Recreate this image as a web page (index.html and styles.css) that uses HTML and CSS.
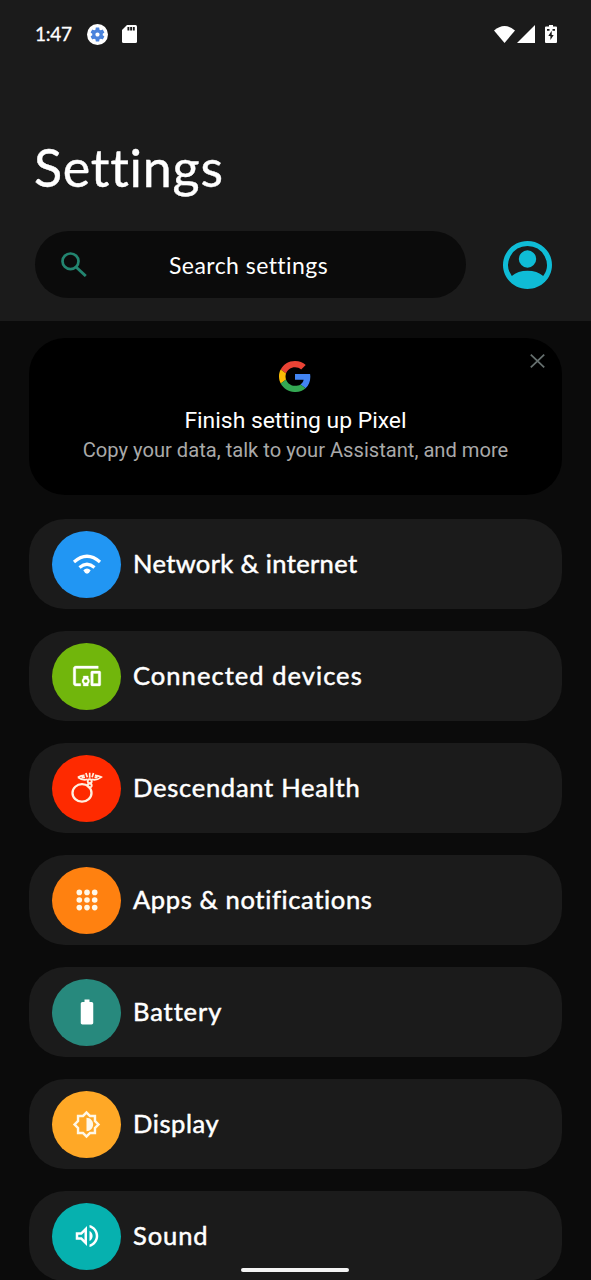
FILE: index.html
```html
<!DOCTYPE html>
<html lang="en">
<head>
<meta charset="utf-8">
<title>Settings</title>
<link rel="stylesheet" href="styles.css">
</head>
<body>
<div class="screen">
  <header class="header">
    <div class="status-bar">
      <span class="clock">1:47</span>
      <svg class="status-gear" viewBox="0 0 24 24"><circle cx="12" cy="12" r="12" fill="#fff"/><path transform="translate(2.4 2.4) scale(.8)" fill="#4a83dc" d="M19.430 12.980c.04-.32.07-.64.07-.98s-.03-.66-.07-.98l2.110-1.650c.19-.15.24-.42.12-.64l-2-3.460c-.12-.22-.39-.3-.61-.22l-2.490 1c-.52-.4-1.080-.73-1.690-.98l-.38-2.650C14.460 2.180 14.250 2 14 2h-4c-.25 0-.46.18-.49.42l-.38 2.650c-.61.25-1.170.59-1.690.98l-2.490-1c-.23-.09-.49 0-.61.22l-2 3.460c-.13.22-.07.49.12.64l2.110 1.650c-.04.32-.07.65-.07.98s.03.66.07.98l-2.110 1.650c-.19.15-.24.42-.12.64l2 3.460c.12.22.39.3.61.22l2.490-1c.52.4 1.080.73 1.690.98l.38 2.650c.03.24.24.42.49.42h4c.25 0 .46-.18.49-.42l.38-2.650c.61-.25 1.170-.59 1.690-.98l2.490 1c.23.09.49 0 .61-.22l2-3.460c.12-.22.07-.49-.12-.64l-2.110-1.650zM12 15c-1.700 0-3-1.300-3-3s1.300-3 3-3 3 1.300 3 3-1.300 3-3 3z"/></svg>
      <svg class="status-sd" viewBox="0 0 15 18"><path fill="#fff" d="M5 0h8.500q1.500 0 1.500 1.500v15q0 1.500-1.500 1.500h-12q-1.500 0-1.500-1.500V5z"/><path stroke="#1b1b1b" stroke-width="1.900" d="M6.400 2v3.600M9.100 2v3.600M11.800 2v3.600"/></svg>
      <div class="status-right">
        <svg class="status-wifi" viewBox="0 0 21 17"><path fill="#fff" d="M0 4.500Q10.500-4.500 21 4.500L10.500 17z"/></svg>
        <svg class="status-signal" viewBox="0 0 18 18"><path fill="#fff" d="M18 0v18H0z"/></svg>
        <svg class="status-battery" viewBox="0 0 12 18"><path fill="#fff" d="M4 0h4v1.500h3q1 0 1 1V17q0 1-1 1H1q-1 0-1-1V2.500q0-1 1-1h3z"/><path fill="#1b1b1b" d="M2 4h2.500v1.800H2zM7.500 4H10v1.800H7.500zM6.700 5.800v4.100h2L5.400 15v-4H3.300z"/></svg>
      </div>
    </div>
    <h1 class="title">Settings</h1>
    <div class="search-row">
      <div class="search">
        <svg class="search-icon" viewBox="0 0 26 25"><ellipse cx="9.500" cy="9.300" rx="8" ry="7.800" fill="none" stroke="#238570" stroke-width="2.700"/><path d="M15 15l9.800 9" stroke="#238570" stroke-width="2.900"/></svg>
        <span class="search-text">Search settings</span>
      </div>
      <svg class="avatar" viewBox="2 2 20 20" preserveAspectRatio="none"><path fill="#0fbcd6" d="M12 2C6.480 2 2 6.480 2 12s4.480 10 10 10 10-4.480 10-10S17.520 2 12 2zm0 2.100a7.900 7.900 0 0 1 6.400 12.500C16.800 15.100 14.600 14.400 12 14.400s-4.800.7-6.400 2.200A7.900 7.900 0 0 1 12 4.100z"/><ellipse cx="12" cy="9.500" rx="3.550" ry="3.600" fill="#0fbcd6"/></svg>
    </div>
  </header>
  <main class="content">
    <section class="setup">
      <svg class="google" viewBox="2 2 44 44" preserveAspectRatio="none"><path fill="#ea4335" d="M24 9.500c3.540 0 6.710 1.220 9.210 3.600l6.850-6.850C35.900 2.380 30.470 0 24 0 14.620 0 6.510 5.380 2.560 13.220l7.980 6.190C12.430 13.720 17.740 9.500 24 9.500z" transform="translate(2 2) scale(.917)"/><path fill="#4285f4" d="M46.980 24.550c0-1.570-.15-3.090-.38-4.550H24v9.020h12.940c-.58 2.960-2.260 5.480-4.780 7.180l7.730 6c4.510-4.180 7.090-10.360 7.090-17.650z" transform="translate(2 2) scale(.917)"/><path fill="#fbbc05" d="M10.530 28.590c-.48-1.450-.76-2.990-.76-4.590s.27-3.140.76-4.590l-7.980-6.190C.92 16.460 0 20.120 0 24c0 3.880.92 7.540 2.560 10.780l7.970-6.190z" transform="translate(2 2) scale(.917)"/><path fill="#34a853" d="M24 48c6.480 0 11.930-2.130 15.890-5.810l-7.730-6c-2.150 1.450-4.920 2.300-8.160 2.300-6.260 0-11.570-4.220-13.470-9.910l-7.980 6.190C6.510 42.620 14.620 48 24 48z" transform="translate(2 2) scale(.917)"/></svg>
      <svg class="close" viewBox="0 0 15 14"><path d="M.8.700l13.400 12.600M14.200.700L.8 13.300" stroke="#66706f" stroke-width="1.800"/></svg>
      <div class="setup-title">Finish setting up Pixel</div>
      <div class="setup-sub">Copy your data, talk to your Assistant, and more</div>
    </section>
    <div class="item">
      <div class="badge blue"><svg viewBox="-15 -15 30 30" fill="none" stroke="#fff"><path stroke-width="3.200" d="M-13-2Q0-13.500 13-2"/><path stroke-width="3.200" d="M-7.500 3.500Q0-3 7.500 3.500"/><path fill="#fff" stroke="none" d="M-3.700 6.200Q0 3 3.700 6.200Q2 9.700 0 9.700T-3.700 6.200z"/></svg></div>
      <span class="label network">Network &amp; internet</span>
    </div>
    <div class="item">
      <div class="badge green"><svg viewBox="0 0 24 24" fill="#fff"><path stroke="#fff" stroke-width=".25" d="M3 6h18V4H3c-1.100 0-2 .9-2 2v12c0 1.100.9 2 2 2h4v-2H3V6zm10 6H9v1.780c-.61.55-1 1.330-1 2.220s.39 1.670 1 2.220V20h4v-1.780c.61-.55 1-1.340 1-2.220s-.39-1.670-1-2.220V12zm-2 5.500c-.83 0-1.500-.67-1.500-1.500s.67-1.500 1.500-1.500 1.500.67 1.500 1.500-.67 1.500-1.500 1.500zM22 8h-6c-.5 0-1 .5-1 1v10c0 .5.5 1 1 1h6c.5 0 1-.5 1-1V9c0-.5-.5-1-1-1zm-1 10h-4v-8h4v8z"/></svg></div>
      <span class="label devices">Connected devices</span>
    </div>
    <div class="item">
      <div class="badge red"><svg viewBox="-14.500 -15 30 30" fill="none" stroke="#fff0e0" overflow="visible"><ellipse cx="-4.500" cy="4.900" rx="9.500" ry="8.700" stroke-width="2.300"/><circle cx="3.200" cy="-6.800" r="2" stroke-width="1.900"/><circle cx="3.200" cy="-2.500" r="2" stroke-width="1.900"/><path stroke-width="1.700" d="M-8.600-10.700Q-5-12.800-2-12.700M8.400-12.700Q11-12.800 14.800-10.900Q10-7.200 5.400-8.600M-8.600-10.700Q-4-7.200 1-8.600M-5-10.700H-1.500M8-10.700H11M3.200-15.200v5M-.6-15l1.400 4.200M7-15l-1.400 4.200"/></svg></div>
      <span class="label health">Descendant Health</span>
    </div>
    <div class="item">
      <div class="badge orange"><svg viewBox="-15 -15 30 30" fill="#fff8e8"><circle cx="-7.700" cy="-7.600" r="2.800"/><circle cy="-7.600" r="2.800"/><circle cx="7.700" cy="-7.600" r="2.800"/><circle cx="-7.700" r="2.800"/><circle r="2.800"/><circle cx="7.700" r="2.800"/><circle cx="-7.700" cy="7.600" r="2.800"/><circle cy="7.600" r="2.800"/><circle cx="7.700" cy="7.600" r="2.800"/></svg></div>
      <span class="label apps">Apps &amp; notifications</span>
    </div>
    <div class="item">
      <div class="badge teal"><svg viewBox="0 0 24 24" fill="#fff"><path d="M15.670 4H14V2h-4v2H8.330C7.600 4 7 4.600 7 5.330v15.330C7 21.400 7.600 22 8.330 22h7.330c.74 0 1.340-.6 1.340-1.330V5.330C17 4.600 16.400 4 15.670 4z"/></svg></div>
      <span class="label battery">Battery</span>
    </div>
    <div class="item">
      <div class="badge amber"><svg class="sun" viewBox="0 0 24 24" fill="#fff8e8"><path d="M20 8.690V4h-4.690L12 .69 8.690 4H4v4.690L.69 12 4 15.310V20h4.690L12 23.310 15.310 20H20v-4.690L23.310 12 20 8.690zm-2 5.790V18h-3.520L12 20.480 9.520 18H6v-3.520L3.520 12 6 9.520V6h3.520L12 3.520 14.480 6H18v3.520L20.480 12 18 14.480zM12 6.500v11c3.100 0 5.500-2.400 5.500-5.500S15.100 6.500 12 6.500z"/></svg></div>
      <span class="label display">Display</span>
    </div>
    <div class="item">
      <div class="badge cyan"><svg viewBox="0 0 24 24" fill="#fff"><path d="M3 9v6h4l5 5V4L7 9H3zm7-.17v6.340L7.830 13H5v-2h2.830L10 8.830zM16.500 12c0-1.770-1.020-3.290-2.500-4.030v8.050c1.480-.73 2.500-2.250 2.500-4.020zM14 3.230v2.060c2.890.86 5 3.540 5 6.710s-2.110 5.850-5 6.710v2.060c4.010-.91 7-4.490 7-8.770s-2.990-7.860-7-8.770z"/></svg></div>
      <span class="label sound">Sound</span>
    </div>
  </main>
  <div class="nav-handle"></div>
</div>
</body>
</html>
```
FILE: styles.css
```css
* { box-sizing: border-box; }
body { margin: 0; background: #0b0b0b; color: #fff; font-family: Lato, "Open Sans", sans-serif; }
svg { display: block; flex: none; }
.screen { position: relative; width: 591px; height: 1280px; overflow: hidden; background: #0b0b0b; }
.header { height: 321px; background: #1b1b1b; }
.status-bar { display: flex; align-items: center; height: 68px; padding: 0 34px 0 35px; }
.clock { width: 52px; font-size: 19px; line-height: 24px; letter-spacing: -.3px; white-space: nowrap; -webkit-text-stroke: .3px #fff; }
.status-gear { width: 21px; height: 21px; }
.status-sd { width: 15px; height: 18px; margin-left: 14px; }
.status-right { display: flex; align-items: center; margin-left: auto; }
.status-wifi { width: 21px; height: 17px; }
.status-signal { width: 18px; height: 18px; margin-left: 2px; }
.status-battery { width: 12px; height: 18px; margin-left: 10px; }
.title { width: max-content; margin: 66px 0 0 34px; font-size: 52px; line-height: 66px; font-weight: 400; letter-spacing: .75px; -webkit-text-stroke: .4px #fff; }
.search-row { display: flex; align-items: center; margin-top: 31px; padding: 0 39px 0 35px; justify-content: space-between; }
.search { display: flex; align-items: center; width: 431px; height: 67px; padding-left: 26px; border-radius: 34px; background: #0b0b0b; }
.search-icon { width: 26px; height: 25px; }
.search-text { margin-left: 82px; font-size: 23px; line-height: 30px; letter-spacing: .45px; white-space: nowrap; }
.avatar { width: 49px; height: 48px; }
.content { display: flex; flex-direction: column; padding: 17px 29px 0; }
.setup { position: relative; height: 157px; margin-bottom: 24px; padding-top: 23px; border-radius: 36px; background: #000; font-family: Roboto, sans-serif; text-align: center; }
.google { width: 32px; height: 31px; margin: 0 auto 0 250px; }
.close { position: absolute; top: 16px; right: 17px; width: 15px; height: 14px; }
.setup-title { margin-top: 15px; font-size: 22.900px; line-height: 28px; white-space: nowrap; }
.setup-sub { font-size: 20.150px; line-height: 30px; color: #a9a9a9; white-space: nowrap; }
.item { display: flex; flex: none; align-items: center; height: 90px; margin-bottom: 22px; padding-left: 23px; border-radius: 36px; background: #1b1b1b; }
.badge { display: flex; flex: none; align-items: center; justify-content: center; width: 69px; height: 67px; border-radius: 50%; }
.badge svg { width: 30px; height: 30px; }
.badge .sun { width: 29px; height: 29px; }
.blue { background: #2196f3; }
.green { background: #71b60c; }
.red { background: #fe2a00; }
.orange { background: #ff8110; }
.teal { background: #27897d; }
.amber { background: #ffa826; }
.cyan { background: #06b1af; }
.label { margin-left: 12px; padding-bottom: 2px; font-size: 25.500px; line-height: 32px; white-space: nowrap; -webkit-text-stroke: .5px #fff; }
.network { letter-spacing: .35px; }
.devices { letter-spacing: 1.050px; }
.health { letter-spacing: .75px; }
.apps { letter-spacing: .65px; }
.battery { letter-spacing: .9px; }
.display { letter-spacing: .6px; }
.sound { letter-spacing: .9px; }
.nav-handle { position: absolute; left: 241px; top: 1268px; width: 108px; height: 4px; border-radius: 2px; background: #f4f4f4; }
```
